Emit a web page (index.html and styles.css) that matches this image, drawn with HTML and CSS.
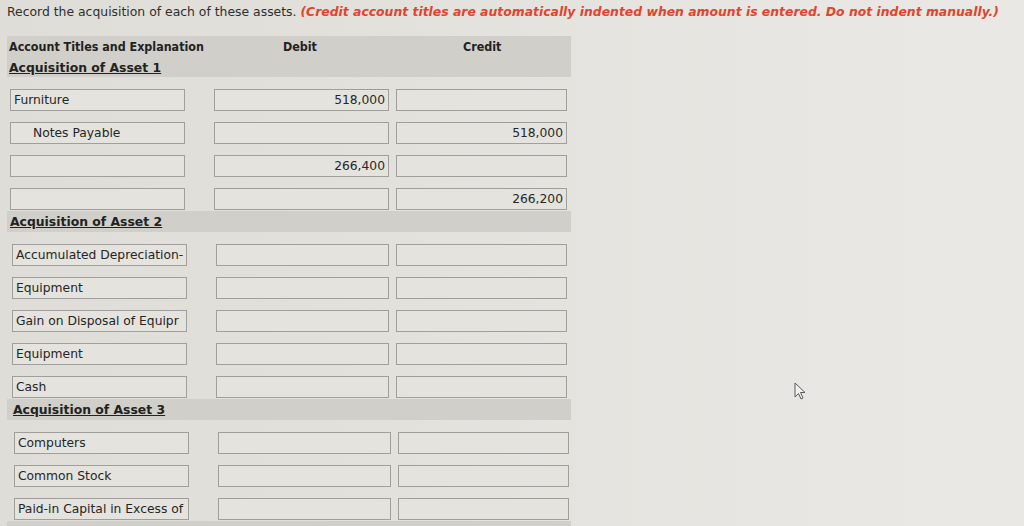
FILE: index.html
```html
<!DOCTYPE html>
<html>
<head>
<meta charset="utf-8">
<link rel="stylesheet" href="styles.css">
</head>
<body>
<div class="page">
  <p class="prompt">Record the acquisition of each of these assets. <em class="note">(Credit account titles are automatically indented when amount is entered. Do not indent manually.)</em></p>
  <div class="journal">
    <div class="band band-top">
      <div class="heads">
        <span class="h-acc">Account Titles and Explanation</span>
        <span class="h-deb">Debit</span>
        <span class="h-cre">Credit</span>
      </div>
      <div class="sec">Acquisition of Asset 1</div>
    </div>
    <div class="row"><div class="box acc">Furniture</div><div class="box deb">518,000</div><div class="box cre"></div></div>
    <div class="row"><div class="box acc indent">Notes Payable</div><div class="box deb"></div><div class="box cre">518,000</div></div>
    <div class="row"><div class="box acc"></div><div class="box deb">266,400</div><div class="box cre"></div></div>
    <div class="row"><div class="box acc"></div><div class="box deb"></div><div class="box cre">266,200</div></div>
    <div class="band"><div class="sec">Acquisition of Asset 2</div></div>
    <div class="row s2"><div class="box acc">Accumulated Depreciation-</div><div class="box deb"></div><div class="box cre"></div></div>
    <div class="row s2"><div class="box acc">Equipment</div><div class="box deb"></div><div class="box cre"></div></div>
    <div class="row s2"><div class="box acc">Gain on Disposal of Equipr</div><div class="box deb"></div><div class="box cre"></div></div>
    <div class="row s2"><div class="box acc">Equipment</div><div class="box deb"></div><div class="box cre"></div></div>
    <div class="row s2"><div class="box acc">Cash</div><div class="box deb"></div><div class="box cre"></div></div>
    <div class="band s2"><div class="sec">Acquisition of Asset 3</div></div>
    <div class="row s3"><div class="box acc">Computers</div><div class="box deb"></div><div class="box cre"></div></div>
    <div class="row s3"><div class="box acc">Common Stock</div><div class="box deb"></div><div class="box cre"></div></div>
    <div class="row s3"><div class="box acc">Paid-in Capital in Excess of</div><div class="box deb"></div><div class="box cre"></div></div>
    <div class="band band-end"></div>
  </div>
  <svg class="cursor" width="14" height="20" viewBox="0 0 14 20"><path d="M1 1 L1 15 L4.5 11.5 L7 17 L9 16 L6.5 10.5 L11 10.5 Z" fill="#f2f1ee" stroke="#5a5a5a" stroke-width="1"/></svg>
</div>
</body>
</html>
```

FILE: styles.css
```css
html, body {
  margin: 0;
  padding: 0;
}
body {
  width: 1024px;
  height: 526px;
  overflow: hidden;
  background: linear-gradient(90deg, #dfddd7 0%, #e3e1dc 40%, #e8e6e2 75%, #e9e8e4 100%);
  font-family: "DejaVu Sans", Verdana, sans-serif;
  color: #222;
}
.page {
  position: relative;
  height: 526px;
}
.prompt {
  margin: 0;
  padding: 3px 0 0 7px;
  font-size: 12.4px;
  line-height: 18px;
  white-space: nowrap;
  color: #2e2e2e;
}
.note {
  color: #e2432c;
  font-weight: bold;
  font-style: italic;
}
.journal {
  margin: 15px 0 0 7px;
  width: 564px;
}
.band {
  background: #d0cfc9;
  height: 21px;
  margin-top: 1px;
  padding-left: 3px;
}
.band-top {
  height: 41px;
  margin-top: 0;
  padding-left: 2px;
}
.band-end {
  height: 6px;
  margin-top: 1px;
}
.heads {
  display: grid;
  grid-template-columns: 274px 180px auto;
  font-family: "DejaVu Sans Condensed", "DejaVu Sans", sans-serif;
  font-size: 12.4px;
  font-weight: bold;
  line-height: 20px;
  padding-top: 1px;
  color: #222;
}
.sec {
  font-size: 12.4px;
  font-weight: bold;
  text-decoration: underline;
  line-height: 21px;
  color: #222;
}
.band-top .sec { line-height: 20px; padding-top: 1px; }
.row {
  display: flex;
  margin-top: 11px;
  height: 22px;
  padding-left: 3px;
}
.band + .row { margin-top: 12px; }
.row.s2 { padding-left: 5px; }
.row.s3 { padding-left: 7px; }
.band.s2 { padding-left: 6px; }
.box {
  box-sizing: border-box;
  height: 22px;
  border: 1px solid #a09f9b;
  background: #e4e3de;
  font-size: 12.3px;
  line-height: 20px;
  color: #262626;
  white-space: nowrap;
  overflow: hidden;
}
.acc {
  width: 175px;
  padding-left: 3px;
}
.acc.indent { padding-left: 22px; }
.deb {
  width: 175px;
  margin-left: 29px;
  text-align: right;
  padding-right: 3px;
}
.cre {
  width: 171px;
  margin-left: 7px;
  text-align: right;
  padding-right: 3px;
}
.row.s2 .deb, .row.s3 .deb { width: 173px; }
.cursor {
  position: absolute;
  left: 794px;
  top: 382px;
}
```
